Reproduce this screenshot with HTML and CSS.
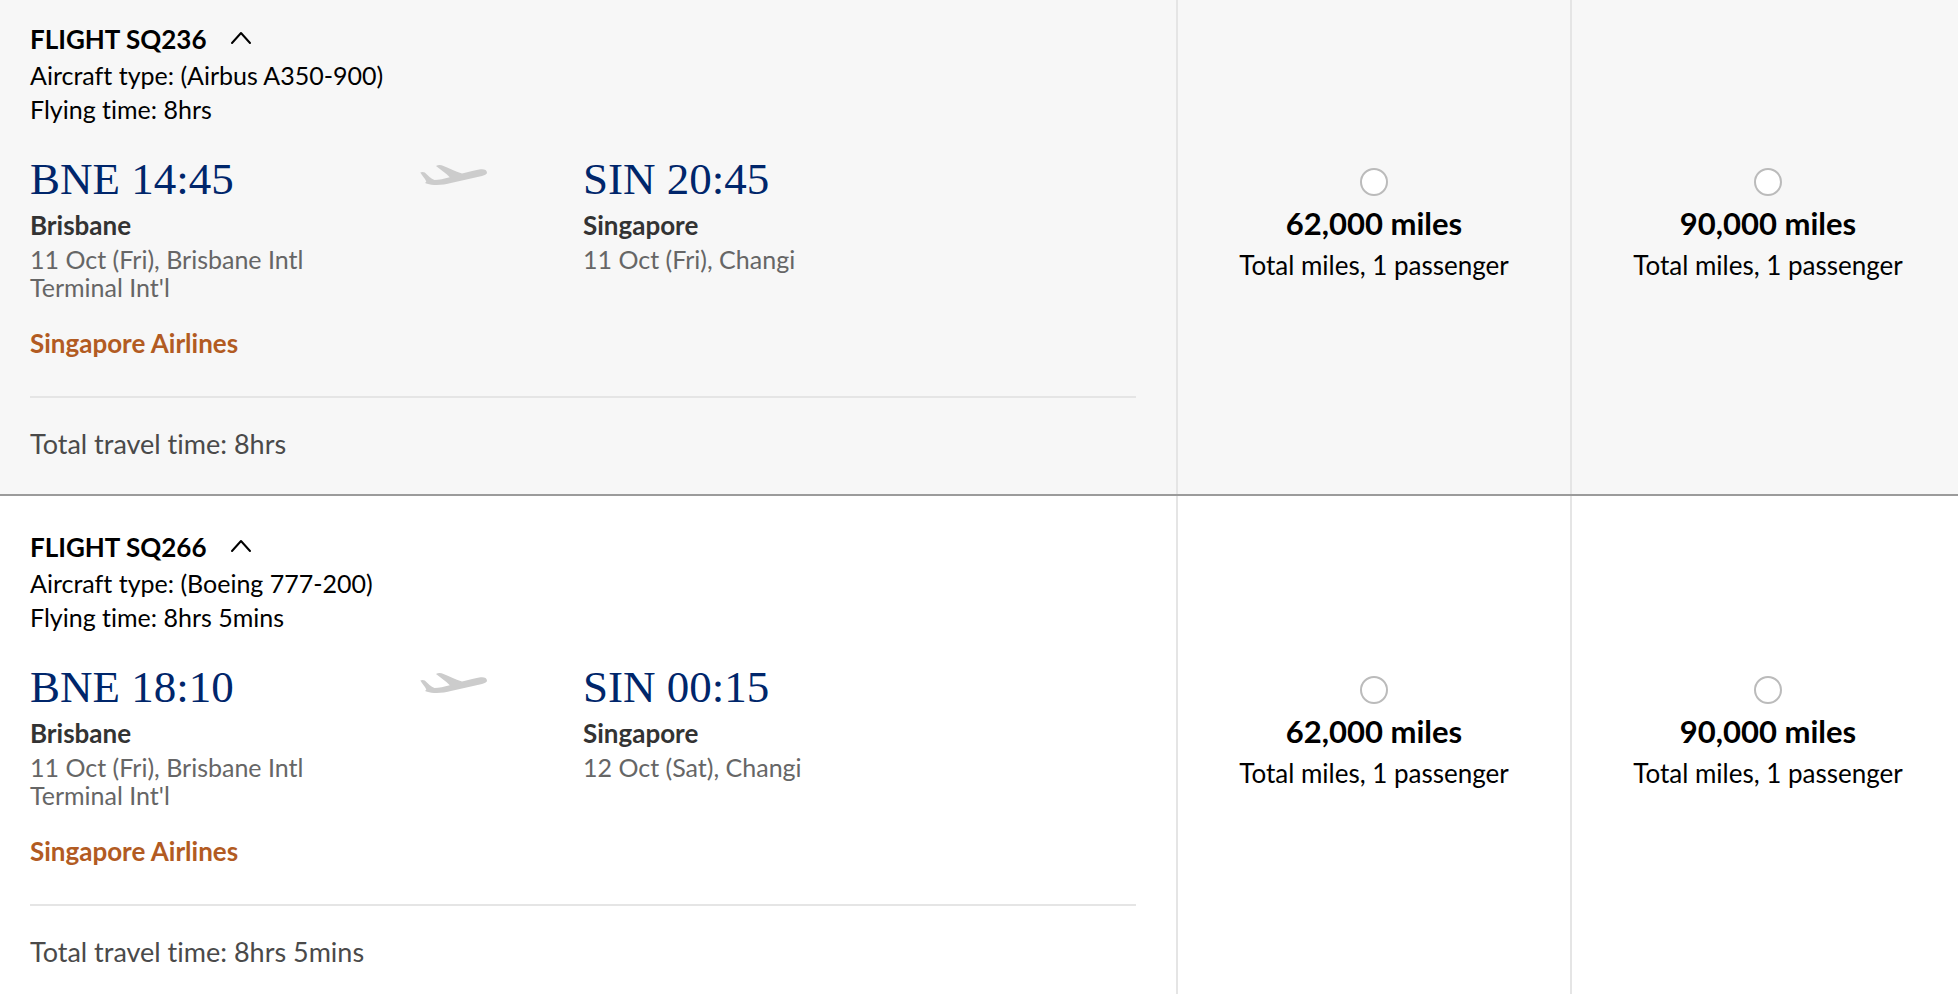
FILE: index.html
```
<!DOCTYPE html>
<html lang="en">
<head>
  <meta charset="UTF-8" />
  <meta name="viewport" content="width=device-width, initial-scale=1.0"/>
  <title>Flight selection</title>
  <link rel="stylesheet" href="styles.css">
</head>
<body>
  <!-- Shared icons -->
  <svg class="sprite" aria-hidden="true">
    <symbol id="chevron" viewBox="0 0 22 14">
      <path d="M2 12 L11 2 L20 12" fill="none" stroke="currentColor" stroke-width="2" stroke-linecap="round" stroke-linejoin="round"/>
    </symbol>
    <symbol id="plane" viewBox="0 0 68 22">
      <path d="M0.3 8.6 Q2.5 7.4 4.8 8.6 C8 11.5 11 15 14.5 16 C19 15.7 24 14.8 29.8 13.2 C25.5 9 20 5 16 2 C18 0.7 21 0.8 23.5 2 C29 4.3 35 7 42 9.6 C49 7.8 56 6 60.5 5.3 C64 4.8 67 6 67 8.5 C67 10.2 65 11.2 62 12 L32 18.8 C25 20.6 19 21.3 14 20.9 C10.5 20.6 7.5 20 5.5 19.2 Q4.8 18.3 6.3 17.4 C5 15 2.5 11.8 0.3 8.6 Z" fill="currentColor"/>
    </symbol>
  </svg>

  <main class="flights">
    <section class="flight shaded">
      <div class="details">
        <div class="heading">
          <h2>FLIGHT SQ236</h2>
          <button type="button" class="toggle" aria-label="Hide flight details" aria-expanded="true">
            <svg><use href="#chevron"/></svg>
          </button>
        </div>
        <p class="info">Aircraft type: (Airbus A350-900)</p>
        <p class="info">Flying time: 8hrs</p>

        <div class="route">
          <div class="stop">
            <div class="time">BNE 14:45</div>
            <div class="city">Brisbane</div>
            <div class="terminal">11 Oct (Fri), Brisbane Intl<br>Terminal Int'l</div>
          </div>
          <svg class="plane" aria-hidden="true"><use href="#plane"/></svg>
          <div class="stop">
            <div class="time">SIN 20:45</div>
            <div class="city">Singapore</div>
            <div class="terminal">11 Oct (Fri), Changi</div>
          </div>
        </div>

        <p class="airline">Singapore Airlines</p>
        <p class="total">Total travel time: 8hrs</p>
      </div>

      <label class="fare">
        <input type="radio" name="fare">
        <span class="miles">62,000 miles</span>
        <span class="note">Total miles, 1 passenger</span>
      </label>
      <label class="fare">
        <input type="radio" name="fare">
        <span class="miles">90,000 miles</span>
        <span class="note">Total miles, 1 passenger</span>
      </label>
    </section>

    <section class="flight">
      <div class="details">
        <div class="heading">
          <h2>FLIGHT SQ266</h2>
          <button type="button" class="toggle" aria-label="Hide flight details" aria-expanded="true">
            <svg><use href="#chevron"/></svg>
          </button>
        </div>
        <p class="info">Aircraft type: (Boeing 777-200)</p>
        <p class="info">Flying time: 8hrs 5mins</p>

        <div class="route">
          <div class="stop">
            <div class="time">BNE 18:10</div>
            <div class="city">Brisbane</div>
            <div class="terminal">11 Oct (Fri), Brisbane Intl<br>Terminal Int'l</div>
          </div>
          <svg class="plane" aria-hidden="true"><use href="#plane"/></svg>
          <div class="stop">
            <div class="time">SIN 00:15</div>
            <div class="city">Singapore</div>
            <div class="terminal">12 Oct (Sat), Changi</div>
          </div>
        </div>

        <p class="airline">Singapore Airlines</p>
        <p class="total">Total travel time: 8hrs 5mins</p>
      </div>

      <label class="fare">
        <input type="radio" name="fare">
        <span class="miles">62,000 miles</span>
        <span class="note">Total miles, 1 passenger</span>
      </label>
      <label class="fare">
        <input type="radio" name="fare">
        <span class="miles">90,000 miles</span>
        <span class="note">Total miles, 1 passenger</span>
      </label>
    </section>
  </main>
</body>
</html>
```
FILE: styles.css
```
* {
  box-sizing: border-box;
}

body {
  margin: 0;
  font-family: 'Lato', 'Open Sans', sans-serif;
  font-size: 26px;
  line-height: 34px;
  font-variant-ligatures: none;
  color: #000;
  background-color: #fff;
}

h2,
p {
  margin: 0;
}

.sprite {
  display: none;
}

.flight {
  display: grid;
  grid-template-columns: 1fr 394px 386px;
}

.flight.shaded {
  background-color: #f7f7f7;
  border-bottom: 2px solid #9b9b9b;
}

.details {
  padding: 34px 40px 24px 30px;
  border-right: 2px solid #e5e5e5;
}

.shaded .details {
  padding-top: 22px;
  padding-bottom: 32px;
}

.heading {
  display: flex;
  align-items: center;
  gap: 24px;
  margin-bottom: 2px;
}

h2 {
  font-size: 26px;
  line-height: 34px;
  font-weight: bold;
}

.toggle {
  display: flex;
  padding: 0 0 3px;
  border: none;
  background: none;
  color: #000;
  cursor: pointer;
}

.toggle svg {
  width: 22px;
  height: 14px;
}

.info {
  font-size: 25px;
}

.route {
  display: grid;
  grid-template-columns: 35% 15% 50%;
  margin-top: 27px;
}

.time {
  font-family: 'Liberation Serif', serif;
  font-size: 45px;
  line-height: 52px;
  color: #00266b;
}

.city {
  margin-top: 3px;
  font-weight: bold;
  color: #333;
}

.terminal {
  margin-top: 3px;
  font-size: 25px;
  line-height: 28px;
  color: #666;
}

.plane {
  width: 68px;
  height: 22px;
  margin: 11px 3px;
  color: #ccc;
}

.airline {
  margin-top: 25px;
  padding-bottom: 36px;
  border-bottom: 2px solid #e5e5e5;
  font-weight: bold;
  color: #b25b22;
}

.total {
  margin-top: 28px;
  font-size: 27px;
  line-height: 36px;
  color: #4a4a4a;
}

.fare {
  display: flex;
  flex-direction: column;
  align-items: center;
  padding-top: 180px;
  border-right: 2px solid #e5e5e5;
  cursor: pointer;
}

.fare:last-child {
  padding-left: 6px;
  border-right: none;
}

.shaded .fare {
  padding-top: 168px;
}

.fare input {
  appearance: none;
  width: 28px;
  height: 28px;
  margin: 0 0 10px;
  border: 2px solid #bbb;
  border-radius: 50%;
  background-color: #fff;
}

.fare input:checked {
  border: 8px solid #00266b;
}

.miles {
  font-size: 31px;
  font-weight: bold;
}

.note {
  margin-top: 8px;
}
```
